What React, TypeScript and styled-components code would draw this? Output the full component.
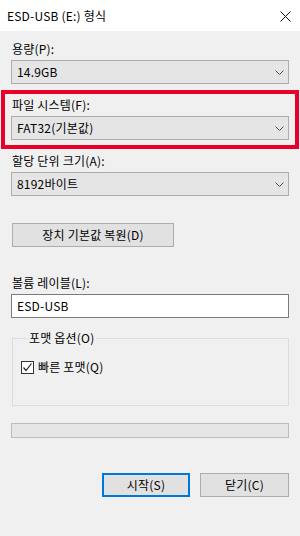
import React from "react";
import styled, { createGlobalStyle } from "styled-components";

const Global = createGlobalStyle`
  html, body { margin: 0; padding: 0; background: #f0f0f0; }
  body { font-family: "Noto Sans CJK KR", "Noto Sans", sans-serif; font-size: 12px; color: #000; letter-spacing: 0.2px; }
  * { box-sizing: border-box; }
`;

const Window = styled.div`
  width: 300px;
  height: 536px;
  background: #f0f0f0;
  display: flex;
  flex-direction: column;
  overflow: hidden;
`;

const TitleBar = styled.div`
  height: 31px;
  background: #fff;
  display: flex;
  align-items: center;
  justify-content: space-between;
  padding: 0 9px 0 7px;
  font-size: 12px;
  line-height: 16px;
`;

const CloseIcon = styled.svg`
  width: 11px;
  height: 11px;
  margin-top: 1px;
`;

const Content = styled.div`
  display: flex;
  flex-direction: column;
  padding: 10px 11px 0;
`;

const Label = styled.div<{ $mt?: number }>`
  height: 16px;
  line-height: 16px;
  padding-left: 1px;
  margin-top: ${(p) => p.$mt ?? 0}px;
  margin-bottom: 3px;
  white-space: nowrap;
`;

const Combo = styled.div`
  height: 24px;
  background: #e5e5e5;
  border: 1px solid #acacac;
  display: flex;
  align-items: center;
  justify-content: space-between;
  padding: 0 5px 0 5px;
  line-height: 16px;
`;

const Chevron = styled.svg`
  width: 9px;
  height: 5px;
  margin-right: -1px;
`;

const Highlight = styled.div`
  margin: 6px -10px 0;
  border: 4px solid #e8002b;
  padding: 3px 6px 5px;
  display: flex;
  flex-direction: column;
`;

const Button = styled.button<{ $default?: boolean; $w: number; $mt?: number }>`
  width: ${(p) => p.$w}px;
  height: 24px;
  margin-top: ${(p) => p.$mt ?? 0}px;
  background: #e1e1e1;
  border: ${(p) => (p.$default ? "2px solid #0078d7" : "1px solid #adadad")};
  font-family: inherit;
  font-size: 12px;
  letter-spacing: 0.2px;
  line-height: 16px;
  color: #000;
  padding: 0;
  display: flex;
  align-items: center;
  justify-content: center;
`;

const RestoreButton = styled(Button)`
  margin-left: 1px;
`;

const TextBox = styled.div`
  height: 24px;
  background: #fff;
  border: 1px solid #7a7a7a;
  display: flex;
  align-items: center;
  padding: 0 5px;
  line-height: 16px;
`;

const Group = styled.fieldset`
  margin: 12px 0 0 1px;
  padding: 13px 8px 0;
  height: 76px;
  border: 1px solid #dcdcdc;
  min-width: 0;
`;

const Legend = styled.legend`
  padding: 0 2px;
  margin-left: 6px;
  line-height: 16px;
  font-size: 12px;
`;

const CheckRow = styled.label`
  display: flex;
  align-items: center;
  gap: 4px;
  line-height: 16px;
`;

const CheckBox = styled.span`
  width: 13px;
  height: 13px;
  background: #fff;
  border: 1px solid #333;
  display: flex;
  align-items: center;
  justify-content: center;
`;

const Progress = styled.div`
  margin-top: 17px;
  height: 15px;
  background: #e6e6e6;
  border: 1px solid #bcbcbc;
`;

const ButtonRow = styled.div`
  margin-top: 35px;
  display: flex;
  justify-content: flex-end;
  gap: 10px;
`;

const Down = () => (
  <Chevron viewBox="0 0 9 5">
    <polyline points="0.5,0.5 4.5,4.5 8.5,0.5" fill="none" stroke="#555" strokeWidth="1" />
  </Chevron>
);

const Select = ({ value }: { value: string }) => (
  <Combo>
    <span>{value}</span>
    <Down />
  </Combo>
);

export default function App() {
  return (
    <>
      <Global />
      <Window>
        <TitleBar>
          <span>ESD-USB (E:) 형식</span>
          <CloseIcon viewBox="0 0 11 11">
            <path d="M0.5 0.5 L10.5 10.5 M10.5 0.5 L0.5 10.5" stroke="#111" strokeWidth="1" fill="none" />
          </CloseIcon>
        </TitleBar>
        <Content>
          <Label>용량(P):</Label>
          <Select value="14.9GB" />
          <Highlight>
            <Label>파일 시스템(F):</Label>
            <Select value="FAT32(기본값)" />
          </Highlight>
          <Label $mt={4}>할당 단위 크기(A):</Label>
          <Select value="8192바이트" />
          <RestoreButton $w={162} $mt={27}>장치 기본값 복원(D)</RestoreButton>
          <Label $mt={28}>볼륨 레이블(L):</Label>
          <TextBox>ESD-USB</TextBox>
          <Group>
            <Legend>포맷 옵션(O)</Legend>
            <CheckRow>
              <CheckBox>
                <svg width="11" height="11" viewBox="0 0 11 11">
                  <polyline points="1.5,5.5 4,8.5 9.5,1.5" fill="none" stroke="#222" strokeWidth="1.2" />
                </svg>
              </CheckBox>
              빠른 포맷(Q)
            </CheckRow>
          </Group>
          <Progress />
          <ButtonRow>
            <Button $default $w={88}>시작(S)</Button>
            <Button $w={89}>닫기(C)</Button>
          </ButtonRow>
        </Content>
      </Window>
    </>
  );
}
